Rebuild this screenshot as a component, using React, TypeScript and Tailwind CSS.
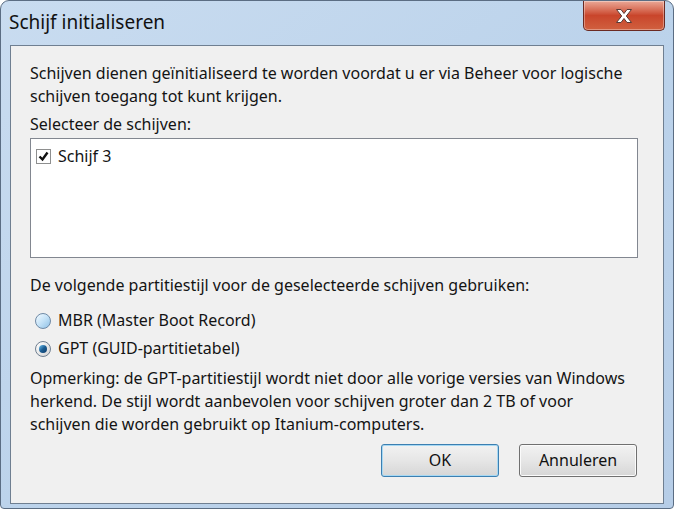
export default function App() {
  return (
    <div className="w-[674px] h-[510px] bg-white overflow-hidden" style={{ fontFamily: '"Segoe UI", "Noto Sans", sans-serif' }}>
      <div className="w-[674px] h-[509px] flex flex-col rounded-t-[9px] rounded-b-[4px] border border-[#5b6d83] bg-gradient-to-br from-[#c9dcf0] via-[#bcd3eb] to-[#b6cde7]">
        {/* title bar */}
        <div className="h-[44px] flex items-start justify-between">
          <div className="pl-[8px] pt-[8px] text-[19px] leading-[26px] text-[#111]">Schijf initialiseren</div>
          <div className="mr-[8px] w-[82px] h-[30px] rounded-b-[5px] border border-t-0 border-[#6b2a22] bg-gradient-to-b from-[#eaa897] via-[#c9452b] to-[#d0603f] flex items-center justify-center shadow-[inset_0_0_0_1px_rgba(255,255,255,0.35)]">
            <svg width="22" height="18" viewBox="0 0 22 18">
              <path d="M3.5 2.5h4.5l3 4 3-4h4.5l-5.2 6.5 5.2 6.5h-4.5l-3-4-3 4H3.5l5.2-6.5z" fill="#fff" stroke="#5a3a36" strokeWidth="1" strokeLinejoin="round" />
            </svg>
          </div>
        </div>
        {/* client area */}
        <div className="mx-[9px] h-[459px] border border-[#6f7f91] bg-[#f0f0f0] pl-[19px] pr-[26px] pt-[16px] text-[16px] leading-[23px] text-[#141414]">
          <p>Schijven dienen geïnitialiseerd te worden voordat u er via Beheer voor logische schijven toegang tot kunt krijgen.</p>
          <p className="mt-[5px]">Selecteer de schijven:</p>
          <div className="mt-[2px] w-[608px] h-[120px] border border-[#828790] bg-white px-[5px] pt-[6px]">
            <div className="flex items-center gap-[7px]">
              <div className="w-[15px] h-[15px] border border-[#8e8f8f] bg-white flex items-center justify-center">
                <svg width="11" height="11" viewBox="0 0 11 11">
                  <path d="M1.5 5.5l3 3 5-7" fill="none" stroke="#111" strokeWidth="2.4" />
                </svg>
              </div>
              <span>Schijf 3</span>
            </div>
          </div>
          <p className="mt-[16px]">De volgende partitiestijl voor de geselecteerde schijven gebruiken:</p>
          <div className="mt-[12px] pl-[5px] flex flex-col gap-[5px]">
            <div className="flex items-center gap-[7px]">
              <div className="w-[16px] h-[16px] rounded-full border border-[#6f8aa6] bg-gradient-to-br from-[#f4fbff] via-[#c4e2f7] to-[#8fc1e6]" />
              <span>MBR (Master Boot Record)</span>
            </div>
            <div className="flex items-center gap-[7px]">
              <div className="w-[16px] h-[16px] rounded-full border border-[#6f7f91] bg-gradient-to-br from-[#ffffff] to-[#d4d4d4] flex items-center justify-center">
                <div className="w-[8px] h-[8px] rounded-full bg-gradient-to-br from-[#6cc2f0] via-[#1b5d93] to-[#0e3c6a]" />
              </div>
              <span>GPT (GUID-partitietabel)</span>
            </div>
          </div>
          <p className="mt-[7px]">Opmerking: de GPT-partitiestijl wordt niet door alle vorige versies van Windows herkend. De stijl wordt aanbevolen voor schijven groter dan 2 TB of voor schijven die worden gebruikt op Itanium-computers.</p>
          <div className="mt-[8px] flex justify-end gap-[20px]">
            <button className="w-[118px] h-[33px] rounded-[3px] border border-[#3c7fb1] bg-gradient-to-b from-[#f2f2f2] via-[#e6e6e6] to-[#d6d6d6] shadow-[inset_0_0_0_1px_#a6d8f3] text-[16px] text-[#111]">OK</button>
            <button className="w-[118px] h-[33px] rounded-[3px] border border-[#707070] bg-gradient-to-b from-[#f2f2f2] via-[#e6e6e6] to-[#d6d6d6] shadow-[inset_0_0_0_1px_#fbfbfb] text-[16px] text-[#111]">Annuleren</button>
          </div>
        </div>
      </div>
    </div>
  );
}
